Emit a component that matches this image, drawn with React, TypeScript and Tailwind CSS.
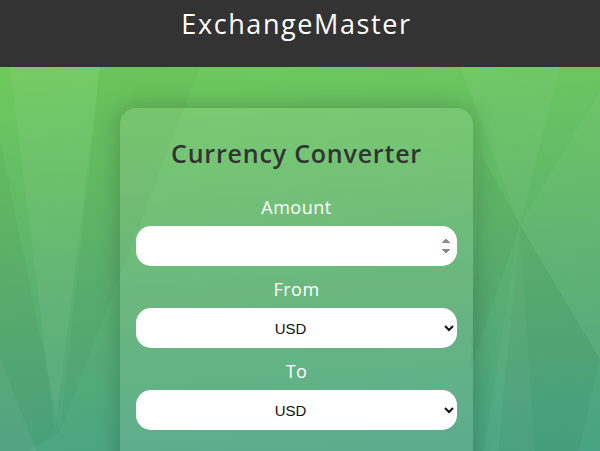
import React, { useState } from "react";

const currencies = ["USD", "EUR", "GBP", "JPY", "INR", "AUD", "CAD"];

const Facets: React.FC = () => (
  <svg
    className="absolute inset-0 h-full w-full"
    viewBox="0 0 600 384"
    preserveAspectRatio="none"
  >
    <polygon points="10,0 100,0 55,300" fill="#ffffff" opacity="0.05" />
    <polygon points="0,60 60,300 0,330" fill="#000000" opacity="0.03" />
    <polygon points="100,0 200,0 60,300" fill="#000000" opacity="0.025" />
    <polygon points="0,240 70,384 0,384" fill="#ffffff" opacity="0.05" />
    <polygon points="60,330 0,384 130,384" fill="#000000" opacity="0.04" />
    <polygon points="460,0 560,0 520,130" fill="#ffffff" opacity="0.04" />
    <polygon points="520,130 600,20 600,240" fill="#ffffff" opacity="0.035" />
    <polygon points="520,130 600,240 560,384 490,384" fill="#000000" opacity="0.03" />
    <polygon points="480,70 520,130 470,250" fill="#000000" opacity="0.03" />
    <polygon points="520,130 470,384 540,384" fill="#ffffff" opacity="0.035" />
  </svg>
);

const App: React.FC = () => {
  const [amount, setAmount] = useState("");
  const [from, setFrom] = useState("USD");
  const [to, setTo] = useState("USD");

  const fieldClass =
    "h-[40px] w-full rounded-[15px] border-0 bg-white px-3 text-[15px] text-[#111111] outline-none";
  const labelClass =
    "h-[26px] text-center text-[18px] leading-[26px] tracking-[0.5px] text-white";

  return (
    <div className="min-h-screen font-['Open_Sans',sans-serif]">
      <header className="flex h-[67px] justify-center bg-[#333333] pt-[6px] pr-[7px]">
        <h1 className="text-[27px] font-medium leading-[36px] tracking-[1.6px] text-white">
          ExchangeMaster
        </h1>
      </header>

      <main className="relative flex min-h-[384px] justify-center overflow-hidden bg-[linear-gradient(176deg,#6fca5c_0%,#5aaf70_48%,#409d8d_100%)] pt-[41px] pr-[7px] pb-10">
        <Facets />
        <div className="relative z-10 w-[353px] rounded-[16px] bg-white/10 px-4 pt-[29px] pb-16 shadow-[0_0_24px_rgba(0,0,0,0.22)]">
          <h2 className="text-center text-[25px] font-semibold leading-[32px] tracking-[0.8px] text-[#333333]">
            Currency Converter
          </h2>

          <div className="mt-[25px] flex flex-col">
            <label className={labelClass}>Amount</label>
            <input
              type="number"
              value={amount}
              onChange={(e) => setAmount(e.target.value)}
              className={`${fieldClass} mt-[6px] pr-[3px] [&::-webkit-inner-spin-button]:opacity-100`}
            />
          </div>

          <div className="mt-[10px] flex flex-col">
            <label className={labelClass}>From</label>
            <select
              value={from}
              onChange={(e) => setFrom(e.target.value)}
              className={`${fieldClass} mt-[6px] font-['Liberation_Sans',sans-serif] [text-align-last:center]`}
            >
              {currencies.map((c) => (
                <option key={c} value={c}>
                  {c}
                </option>
              ))}
            </select>
          </div>

          <div className="mt-[10px] flex flex-col">
            <label className={labelClass}>To</label>
            <select
              value={to}
              onChange={(e) => setTo(e.target.value)}
              className={`${fieldClass} mt-[6px] font-['Liberation_Sans',sans-serif] [text-align-last:center]`}
            >
              {currencies.map((c) => (
                <option key={c} value={c}>
                  {c}
                </option>
              ))}
            </select>
          </div>
        </div>
      </main>
    </div>
  );
};

export default App;
